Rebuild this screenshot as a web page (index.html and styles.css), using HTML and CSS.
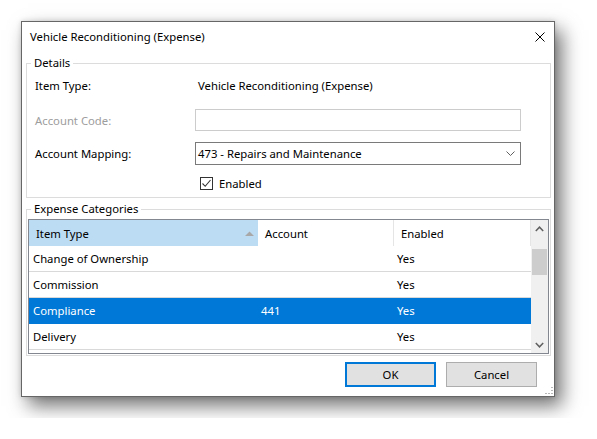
FILE: index.html
```html
<!DOCTYPE html>
<html lang="en">
<head>
    <meta charset="UTF-8">
    <title>Vehicle Reconditioning (Expense)</title>
    <link rel="stylesheet" href="styles.css">
</head>
<body>
    <div class="dialog">
        <div class="titlebar">
            <span class="title">Vehicle Reconditioning (Expense)</span>
            <svg class="close" width="10" height="10" viewBox="0 0 10 10">
                <path d="M0.5 0.5 L9.5 9.5 M9.5 0.5 L0.5 9.5" stroke="#000" stroke-width="1" fill="none"/>
            </svg>
        </div>

        <div class="content">
            <fieldset class="group">
                <legend>Details</legend>
                <div class="details-body">
                    <div class="field">
                        <span class="label">Item Type:</span>
                        <span class="value">Vehicle Reconditioning (Expense)</span>
                    </div>
                    <div class="field field-code">
                        <span class="label disabled">Account Code:</span>
                        <div class="textbox"></div>
                    </div>
                    <div class="field field-mapping">
                        <span class="label">Account Mapping:</span>
                        <div class="combo">
                            <span>473 - Repairs and Maintenance</span>
                            <svg width="9" height="6" viewBox="0 0 9 6">
                                <path d="M0.5 0.5 L4.5 4.5 L8.5 0.5" stroke="#606060" stroke-width="1" fill="none"/>
                            </svg>
                        </div>
                    </div>
                    <div class="field field-check">
                        <span class="checkbox">
                            <svg width="11" height="11" viewBox="0 0 11 11">
                                <path d="M1.5 5.5 L4.2 8.3 L9.5 2" stroke="#333" stroke-width="1.1" fill="none"/>
                            </svg>
                        </span>
                        <span>Enabled</span>
                    </div>
                </div>
            </fieldset>

            <fieldset class="group group-categories">
                <legend>Expense Categories</legend>
                <div class="grid">
                    <div class="grid-main">
                        <div class="grid-head">
                            <div class="hcell col-type sorted">
                                <span>Item Type</span>
                                <svg width="9" height="5" viewBox="0 0 9 5"><path d="M0 5 L4.5 0.5 L9 5 Z" fill="#a8a8a8"/></svg>
                            </div>
                            <div class="hcell col-account">Account</div>
                            <div class="hcell col-enabled">Enabled</div>
                        </div>
                        <div class="grid-row">
                            <div class="cell col-type">Change of Ownership</div>
                            <div class="cell col-account"></div>
                            <div class="cell col-enabled">Yes</div>
                        </div>
                        <div class="grid-row">
                            <div class="cell col-type">Commission</div>
                            <div class="cell col-account"></div>
                            <div class="cell col-enabled">Yes</div>
                        </div>
                        <div class="grid-row selected">
                            <div class="cell col-type">Compliance</div>
                            <div class="cell col-account">441</div>
                            <div class="cell col-enabled">Yes</div>
                        </div>
                        <div class="grid-row">
                            <div class="cell col-type">Delivery</div>
                            <div class="cell col-account"></div>
                            <div class="cell col-enabled">Yes</div>
                        </div>
                    </div>
                    <div class="scrollbar">
                        <div class="sb-button">
                            <svg width="9" height="6" viewBox="0 0 9 6"><path d="M0.8 5 L4.5 1.2 L8.2 5" stroke="#606060" stroke-width="1.5" fill="none"/></svg>
                        </div>
                        <div class="sb-track">
                            <div class="sb-thumb"></div>
                        </div>
                        <div class="sb-button">
                            <svg width="9" height="6" viewBox="0 0 9 6"><path d="M0.8 1 L4.5 4.8 L8.2 1" stroke="#606060" stroke-width="1.5" fill="none"/></svg>
                        </div>
                    </div>
                </div>
            </fieldset>

            <div class="buttons">
                <button class="btn btn-default">OK</button>
                <button class="btn">Cancel</button>
            </div>
        </div>

        <svg class="grip" width="9" height="9" viewBox="0 0 9 9">
            <rect x="7" y="1" width="2" height="1" fill="#b8b8b8"/>
            <rect x="7" y="4" width="2" height="1" fill="#b8b8b8"/>
            <rect x="4" y="7" width="2" height="1" fill="#b8b8b8"/>
            <rect x="7" y="7" width="2" height="1" fill="#b8b8b8"/>
            <rect x="1" y="7" width="2" height="1" fill="#b8b8b8"/>
        </svg>
    </div>
</body>
</html>
```

FILE: styles.css
```css
body {
    margin: 0;
    padding: 21px;
    background-color: #fff;
    font-family: "Noto Sans", "Open Sans", sans-serif;
    font-size: 11.3px;
    color: #000;
}

.dialog {
    position: relative;
    width: 534px;
    height: 376px;
    box-sizing: border-box;
    border: 1px solid #666;
    background: #fff;
    box-shadow: 7px 9px 18px rgba(0, 0, 0, 0.55), 0 0 5px rgba(0, 0, 0, 0.15);
}

.titlebar {
    height: 30px;
    display: flex;
    align-items: center;
    justify-content: space-between;
    padding: 0 9px 0 8px;
}

.title {
    line-height: 16px;
}

.content {
    padding: 3px 3px 0 4px;
}

/* group boxes */
.group {
    margin: 0;
    padding: 0;
    border: 1px solid #dcdcdc;
    min-width: 0;
}

.group legend {
    margin-left: 4px;
    padding: 0 3px;
    line-height: 16px;
}

.details-body {
    padding: 3px 28px 5px 8px;
}

.field {
    display: flex;
    align-items: center;
    height: 22px;
}

.label {
    width: 160px;
    flex-shrink: 0;
}

.label.disabled {
    color: #9d9d9d;
}

.value {
    padding-left: 3px;
}

.field-code {
    margin-top: 13px;
}

.field-mapping {
    margin-top: 11px;
    height: 23px;
}

.field-check {
    margin-top: 9px;
    height: 18px;
    padding-left: 165px;
}

.textbox {
    width: 326px;
    height: 22px;
    box-sizing: border-box;
    border: 1px solid #cccccc;
}

.combo {
    width: 326px;
    height: 23px;
    box-sizing: border-box;
    border: 1px solid #7a7a7a;
    display: flex;
    align-items: center;
    justify-content: space-between;
    padding: 0 5px 0 2px;
}

.checkbox {
    width: 13px;
    height: 13px;
    box-sizing: border-box;
    border: 1px solid #333;
    display: flex;
    align-items: center;
    justify-content: center;
    margin-right: 6px;
}

/* categories grid */
.group-categories {
    margin-top: 3px;
}

.grid {
    margin: 2px 1px 1px;
    height: 135px;
    box-sizing: border-box;
    border: 1px solid #828790;
    display: flex;
    overflow: hidden;
}

.grid-main {
    flex: 1;
}

.grid-head {
    display: flex;
    height: 26px;
}

.hcell {
    display: flex;
    align-items: center;
    padding-left: 7px;
    box-sizing: border-box;
}

.hcell.sorted {
    background: #bcdcf4;
    justify-content: space-between;
    padding-right: 4px;
}

.hcell.col-account,
.hcell.col-enabled {
    border-right: 1px solid #e5e5e5;
}

.col-type {
    width: 229px;
}

.col-account {
    width: 136px;
}

.col-enabled {
    flex: 1;
}

.grid-row {
    display: flex;
    height: 26px;
    box-sizing: border-box;
    border-bottom: 1px solid #d9d9d9;
}

.cell {
    display: flex;
    align-items: center;
    padding-left: 3px;
    box-sizing: border-box;
}

.cell.col-type {
    padding-left: 4px;
}

.grid-row.selected {
    background: #0078d7;
    border-bottom-color: #0078d7;
    color: #fff;
}

.scrollbar {
    width: 17px;
    background: #f0f0f0;
    display: flex;
    flex-direction: column;
}

.sb-button {
    height: 17px;
    display: flex;
    align-items: center;
    justify-content: center;
}

.sb-track {
    flex: 1;
    padding: 12px 1px 0;
}

.sb-thumb {
    height: 26px;
    background: #cdcdcd;
}

/* buttons */
.buttons {
    display: flex;
    justify-content: flex-end;
    gap: 10px;
    margin-top: 6px;
    padding-right: 14px;
}

.btn {
    width: 91px;
    height: 25px;
    box-sizing: border-box;
    border: 1px solid #adadad;
    background: #e1e1e1;
    font-family: inherit;
    font-size: 11.3px;
    color: #000;
    padding: 0;
}

.btn-default {
    border: 2px solid #0078d7;
}

.grip {
    position: absolute;
    right: 1px;
    bottom: 1px;
}
```
